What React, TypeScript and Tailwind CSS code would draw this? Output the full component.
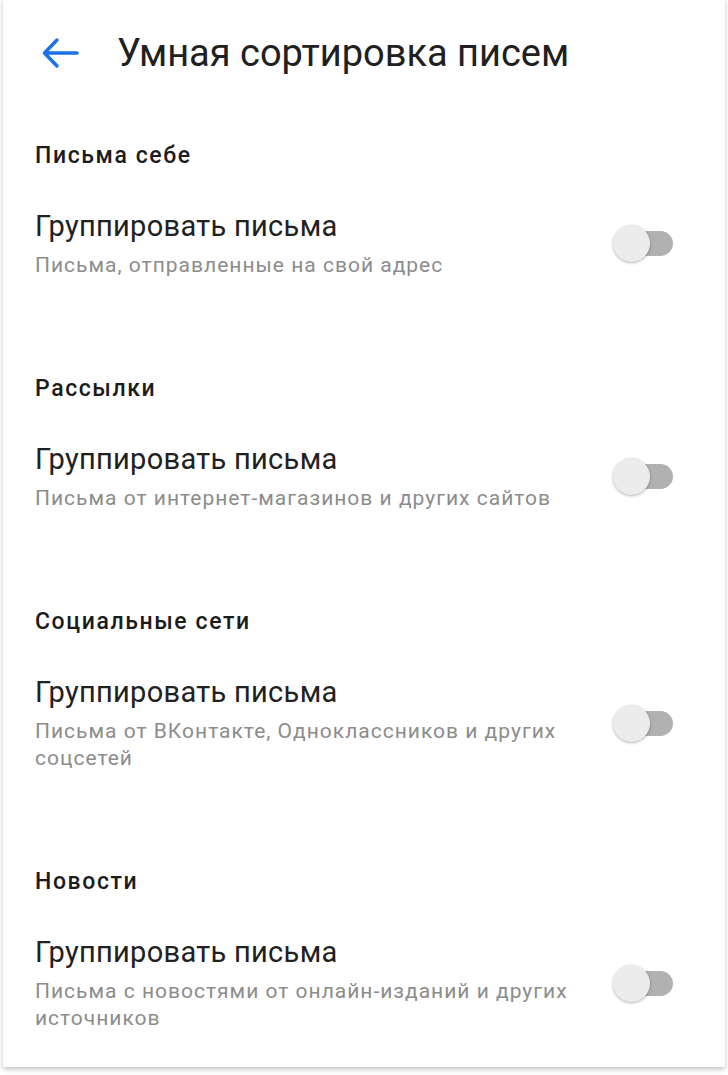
import React, { useState } from 'react';

const sections = [
  { title: 'Письма себе', desc: 'Письма, отправленные на свой адрес' },
  { title: 'Рассылки', desc: 'Письма от интернет-магазинов и других сайтов' },
  { title: 'Социальные сети', desc: 'Письма от ВКонтакте, Одноклассников и других соцсетей' },
  { title: 'Новости', desc: 'Письма с новостями от онлайн-изданий и других источников' },
];

const Toggle = ({ on, onClick }: { on: boolean; onClick: () => void }) => (
  <button onClick={onClick} className="relative w-[60px] h-[37px] shrink-0">
    <span className={`absolute left-[7px] right-0 top-[6px] h-[25px] rounded-full ${on ? 'bg-[#8ab4f8]' : 'bg-[#b1b1b1]'}`} />
    <span
      className={`absolute top-0 w-[37px] h-[37px] rounded-full shadow-[0_1px_3px_rgba(0,0,0,0.3)] ${on ? 'left-[23px] bg-[#1a73e8]' : 'left-0 bg-[#ececec]'}`}
    />
  </button>
);

const App = () => {
  const [enabled, setEnabled] = useState<boolean[]>([false, false, false, false]);

  return (
    <div className="bg-white px-[3px] pb-[8px]" style={{ fontFamily: 'Roboto, "Noto Sans", sans-serif' }}>
      <div className="bg-white h-[1067px] shadow-[0_2px_5px_rgba(0,0,0,0.25)]">
        <div className="h-[106px] flex items-center pl-[37px]">
          <svg width="40" height="32" viewBox="0 0 40 32" className="text-[#1a73e8]">
            <path d="M37 16H5M17 3L4.5 16 17 29" fill="none" stroke="currentColor" strokeWidth="3.5" strokeLinecap="round" strokeLinejoin="round" />
          </svg>
          <h1 className="ml-[37px] text-[38px] leading-none text-[#202020]">Умная сортировка писем</h1>
        </div>

        <div className="pl-[32px] pr-[52px] pt-[35px]">
          {sections.map((s, i) => (
            <div key={s.title} className={i > 0 ? 'mt-[95px]' : ''}>
              <div className="text-[23px] leading-[30px] tracking-[1.6px] font-medium text-[#1c1c1c]">{s.title}</div>
              <div className="mt-[37px] flex items-center justify-between">
                <div className="max-w-[545px]">
                  <div className="text-[29px] leading-[36px] tracking-[0.3px] text-[#212121]">Группировать письма</div>
                  <div className="mt-[8px] text-[21px] leading-[27px] tracking-[1px] text-[#8c8c8c]">{s.desc}</div>
                </div>
                <Toggle
                  on={enabled[i]}
                  onClick={() => setEnabled(enabled.map((v, j) => (j === i ? !v : v)))}
                />
              </div>
            </div>
          ))}
        </div>
      </div>
    </div>
  );
};

export default App;
